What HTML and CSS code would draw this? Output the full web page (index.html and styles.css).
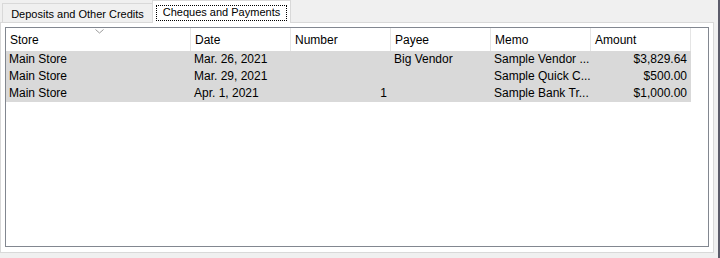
FILE: index.html
```html
<!DOCTYPE html>
<html lang="en">
<head>
  <meta charset="UTF-8">
  <title>Cheques and Payments</title>
  <link rel="stylesheet" href="styles.css">
</head>
<body>
  <div id="janela">
    <div id="abas">
      <div class="aba">Deposits and Other Credits</div>
      <div class="aba ativa"><span class="foco">Cheques and Payments</span></div>
    </div>

    <div id="painel">
      <div id="lista">
        <div class="cabecalho">
          <div class="col">Store<svg class="seta" width="9" height="5" viewBox="0 0 9 5"><polyline points="0.5,0.5 4.5,4 8.5,0.5" fill="none" stroke="#9a9a9a" stroke-width="1"/></svg></div>
          <div class="col">Date</div>
          <div class="col">Number</div>
          <div class="col">Payee</div>
          <div class="col">Memo</div>
          <div class="col">Amount</div>
        </div>

        <div class="linha">
          <div>Main Store</div>
          <div>Mar. 26, 2021</div>
          <div class="num"></div>
          <div>Big Vendor</div>
          <div>Sample Vendor ...</div>
          <div class="num">$3,829.64</div>
        </div>
        <div class="linha">
          <div>Main Store</div>
          <div>Mar. 29, 2021</div>
          <div class="num"></div>
          <div></div>
          <div>Sample Quick C...</div>
          <div class="num">$500.00</div>
        </div>
        <div class="linha">
          <div>Main Store</div>
          <div>Apr. 1, 2021</div>
          <div class="num">1</div>
          <div></div>
          <div>Sample Bank Tr...</div>
          <div class="num">$1,000.00</div>
        </div>
      </div>
    </div>
  </div>
  <div id="borda"></div>
</body>
</html>
```

FILE: styles.css
```css
body {
  margin: 0;
  padding: 0;
  width: 720px;
  height: 258px;
  background-color: #f0f0f0;
  font-family: "Liberation Sans", Arial, sans-serif;
  color: #000;
  display: flex;
  overflow: hidden;
}

#janela {
  width: 718px;
}

#borda {
  width: 2px;
  background-color: #5c5c6a;
}

/* abas */
#abas {
  height: 22px;
  padding-left: 2px;
  display: flex;
  align-items: flex-end;
  font-size: 11px;
}

.aba {
  box-sizing: border-box;
  width: 151px;
  height: 19px;
  border: 1px solid #d9d9d9;
  border-bottom: none;
  background-color: #f0f0f0;
  display: flex;
  justify-content: center;
  align-items: center;
  padding-top: 1px;
}

.aba.ativa {
  width: 139px;
  height: 23px;
  margin-left: -1px;
  margin-bottom: -1px;
  background-color: #fff;
  position: relative;
  z-index: 1;
  align-items: flex-start;
  padding-top: 4px;
}

.foco {
  box-sizing: border-box;
  width: 131px;
  height: 16px;
  border: 1px dotted #000;
  text-align: center;
  line-height: 13px;
}

/* painel */
#painel {
  box-sizing: border-box;
  width: 714px;
  height: 231px;
  border: 1px solid #d9d9d9;
  background-color: #fff;
  padding: 4px 4px 5px 4px;
}

#lista {
  box-sizing: border-box;
  height: 220px;
  border: 1px solid #828790;
  background-color: #fff;
  font-size: 12px;
}

.cabecalho,
.linha {
  display: grid;
  grid-template-columns: 185px 100px 100px 100px 100px 100px;
  width: 685px;
}

.cabecalho .col {
  box-sizing: border-box;
  height: 23px;
  border-right: 1px solid #e5e5e5;
  padding: 5px 0 0 4px;
  line-height: 14px;
  position: relative;
}

.seta {
  position: absolute;
  left: 89px;
  top: 1px;
}

.linha {
  background-color: #d9d9d9;
  height: 17px;
  line-height: 17px;
}

.linha div {
  padding-left: 3px;
  white-space: nowrap;
  overflow: hidden;
}

.linha .num {
  text-align: right;
  padding-right: 4px;
}
```
